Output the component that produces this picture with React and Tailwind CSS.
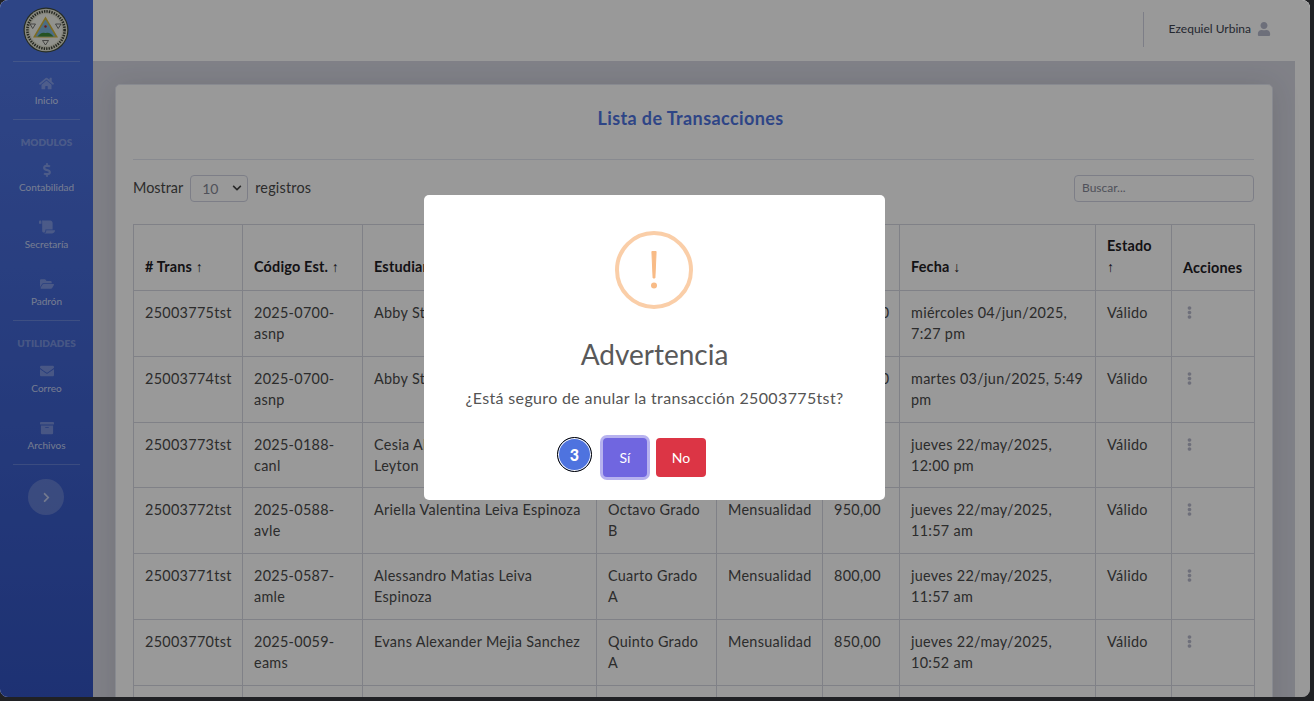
import React from 'react';
import {
  FaHome, FaDollarSign, FaScroll, FaFolderOpen, FaEnvelope, FaArchive, FaChevronRight,
  FaUser, FaEllipsisV, FaChevronDown,
} from 'react-icons/fa';

const FONT = "font-['Lato','Noto_Sans',sans-serif]";

const rows = [
  ['25003775tst', '2025-0700-asnp', 'Abby Stephanie Navarro Perez', 'Octavo Grado A', 'Mensualidad', '1000,00', 'miércoles 04/jun/2025, 7:27 pm'],
  ['25003774tst', '2025-0700-asnp', 'Abby Stephanie Navarro Perez', 'Octavo Grado A', 'Mensualidad', '1000,00', 'martes 03/jun/2025, 5:49 pm'],
  ['25003773tst', '2025-0188-canl', 'Cesia Abigail Navarro Sequeira Leyton', 'Sexto Grado A', 'Mensualidad', '850,00', 'jueves 22/may/2025, 12:00 pm'],
  ['25003772tst', '2025-0588-avle', 'Ariella Valentina Leiva Espinoza', 'Octavo Grado B', 'Mensualidad', '950,00', 'jueves 22/may/2025, 11:57 am'],
  ['25003771tst', '2025-0587-amle', 'Alessandro Matias Leiva Espinoza', 'Cuarto Grado A', 'Mensualidad', '800,00', 'jueves 22/may/2025, 11:57 am'],
  ['25003770tst', '2025-0059-eams', 'Evans Alexander Mejia Sanchez', 'Quinto Grado A', 'Mensualidad', '850,00', 'jueves 22/may/2025, 10:52 am'],
  ['', '', '', '', '', '', ''],
];

const Seal = () => (
  <svg width="46" height="46" viewBox="0 0 46 46">
    <circle cx="23" cy="23" r="22.5" fill="#3f4a3c" />
    <circle cx="23" cy="23" r="21.3" fill="#e2e2d2" />
    <circle cx="23" cy="23" r="18.6" fill="none" stroke="#3d4238" strokeWidth="2.6" strokeDasharray="1.4 1.1" />
    <circle cx="23" cy="23" r="16" fill="#f2f4ec" />
    <path d="M22.5 9.5 L35 30.5 L10 30.5 Z" fill="#d4b435" />
    <path d="M22.5 12.5 L32.6 29.5 L12.4 29.5 Z" fill="#7db6dc" />
    <path d="M14.5 29.5 Q18 24.5 22.5 26 Q27 24.5 30.5 29.5 Z" fill="#3e8a3a" />
    <circle cx="22.5" cy="19.5" r="1.2" fill="#b03030" />
    <path d="M7 17 L12.5 17 L9.7 21.5 Z M32.5 17 L38 17 L35.2 21.5 Z M19.5 33.5 L25.5 33.5 L22.5 38 Z" fill="none" stroke="#555" strokeWidth="0.8" />
  </svg>
);

const NavItem = ({ icon: Icon, label, size = 14 }) => (
  <a className="flex h-[57px] flex-col items-center pt-[14px]">
    <span className="flex h-[14px] items-center">
      <Icon size={size} className="text-white/30" />
    </span>
    <span className="mt-[3px] text-[10px] leading-[15px] text-white/70">{label}</span>
  </a>
);

const Divider = () => <div className="mx-[13px] h-px bg-white/20" />;

const Heading = ({ children }) => (
  <div className="-mb-px pt-[15px] text-center text-[10px] leading-[15px] font-extrabold text-white/30">{children}</div>
);

const Sidebar = () => (
  <aside className="flex w-[93px] shrink-0 flex-col bg-gradient-to-b from-[#4e73df] from-10% to-[#3253c0]">
    <div className="flex h-[61px] items-center justify-center pr-px pb-px"><Seal /></div>
    <Divider />
    <NavItem icon={FaHome} label="Inicio" size={15} />
    <Divider />
    <Heading>MODULOS</Heading>
    <NavItem icon={FaDollarSign} label="Contabilidad" />
    <NavItem icon={FaScroll} label="Secretaría" size={16} />
    <NavItem icon={FaFolderOpen} label="Padrón" />
    <Divider />
    <Heading>UTILIDADES</Heading>
    <NavItem icon={FaEnvelope} label="Correo" />
    <NavItem icon={FaArchive} label="Archivos" />
    <Divider />
    <button className="mt-[14px] ml-[28px] flex h-9 w-9 items-center justify-center rounded-full bg-white/20">
      <FaChevronRight size={11} className="text-white/60" />
    </button>
  </aside>
);

const Topbar = () => (
  <header className="flex h-[61px] shrink-0 items-center justify-end bg-white pr-[39px] pb-[3px]">
    <div className="mr-[25px] h-[35px] w-px bg-[#d1d3e2]" />
    <span className="text-[12px] text-[#3d4351]">Ezequiel Urbina</span>
    <FaUser size={14} className="ml-[6px] text-[#b6b9cc]" />
  </header>
);

const Arrow = ({ children }) => (
  <span className="font-['Liberation_Sans',sans-serif] text-[14px] font-bold">{children}</span>
);

const Th = ({ children }) => (
  <th className="border border-[#d5d7e2] px-[11px] pt-[10px] pb-[12px] text-left align-bottom text-[14.4px] leading-[21px] font-bold tracking-[0.2px] text-[#1f2125]">{children}</th>
);

const Td = ({ children }) => (
  <td className="border border-[#d5d7e2] px-[11px] pt-[11px] pb-[11px] align-top text-[14.4px] leading-[21px] tracking-[0.3px] text-[#4a4a4a]">{children}</td>
);

const Table = () => (
  <table className="w-[1121px] table-fixed border-collapse">
    <colgroup>
      <col className="w-[109px]" />
      <col className="w-[120px]" />
      <col className="w-[234px]" />
      <col className="w-[120px]" />
      <col className="w-[106px]" />
      <col className="w-[77px]" />
      <col className="w-[196px]" />
      <col className="w-[76px]" />
      <col className="w-[83px]" />
    </colgroup>
    <thead>
      <tr>
        <Th># Trans <Arrow>↑</Arrow></Th>
        <Th>Código Est. <Arrow>↑</Arrow></Th>
        <Th>Estudiante <Arrow>↑</Arrow></Th>
        <Th>Grado <Arrow>↑</Arrow></Th>
        <Th>Concepto <Arrow>↑</Arrow></Th>
        <Th>Total</Th>
        <Th>Fecha <Arrow>↓</Arrow></Th>
        <Th>Estado<br /><Arrow>↑</Arrow></Th>
        <Th>Acciones</Th>
      </tr>
    </thead>
    <tbody>
      {rows.map((r, i) => (
        <tr key={i} className="h-[65.8px]">
          {r.map((c, j) => <Td key={j}>{c}</Td>)}
          <Td>{r[0] ? 'Válido' : ''}</Td>
          <Td>{r[0] ? <FaEllipsisV size={13} className="mt-[4px] text-[#b7b9cc]" /> : ''}</Td>
        </tr>
      ))}
    </tbody>
  </table>
);

const Card = () => (
  <section className="rounded-[5px] border border-[#e3e6f0] bg-white pr-[18px] pl-[17px] shadow-[0_2px_28px_rgba(58,59,69,0.15)]">
    <h2 className="flex h-[74px] items-end justify-center pr-[6px] pb-[27px] text-[18px] font-bold tracking-[0.4px] text-[#4e73df]">Lista de Transacciones</h2>
    <hr className="border-[#e3e6f0]" />
    <div className="flex h-[64px] items-center justify-between pb-[8px] text-[14.4px] text-[#4a4a4a]">
      <div className="flex items-center">
        <span>Mostrar</span>
        <div className="mx-[7px] flex h-[27px] w-[58px] items-center justify-between rounded-[4px] border border-[#d1d3e2] px-[11px] text-[14px] text-[#858796]">
          10 <FaChevronDown size={10} className="-mr-[6px] text-[#444]" />
        </div>
        <span className="tracking-[0.2px]">registros</span>
      </div>
      <div className="flex h-[27px] w-[180px] items-center rounded-[4px] border border-[#d1d3e2] px-[7px] text-[12px] text-[#858796]">Buscar...</div>
    </div>
    <Table />
  </section>
);

const Modal = () => (
  <div className="absolute inset-0 flex items-start justify-center bg-black/40 pt-[195px] pr-px">
    <div className="flex h-[305px] w-[461px] flex-col items-center rounded-[5px] bg-white">
      <div className="mt-[36px] mr-[2px] flex h-[78px] w-[78px] items-center justify-center rounded-full border-4 border-[#facea8]">
        <svg width="8" height="40" viewBox="0 0 8 40">
          <path d="M1.9 1.5 L6.1 1.5 L4.9 28 L3.1 28 Z" fill="#f8bb86" stroke="#f8bb86" strokeWidth="1" strokeLinejoin="round" />
          <circle cx="4" cy="35.5" r="3" fill="#f8bb86" />
        </svg>
      </div>
      <h2 className="mt-[30px] text-[28px] leading-[30px] text-[#595959]">Advertencia</h2>
      <p className="mt-[17px] text-[16px] leading-[24px] tracking-[0.35px] text-[#545454]">¿Está seguro de anular la transacción 25003775tst?</p>
      <div className="mt-[28px] mr-[46px] flex items-start">
        <div className="mt-[-1px] mr-[11px] flex h-[35px] w-[35px] items-center justify-center rounded-full border-[1.5px] border-black bg-[#4e73df] text-[16px] font-black text-white shadow-[inset_0_0_0_1px_white]">3</div>
        <button className="h-[39px] w-[44px] rounded-[4px] bg-[#7066e0] text-[14px] text-white shadow-[0_0_0_3px_rgba(112,102,224,0.5)]">Sí</button>
        <button className="ml-[9px] h-[39px] w-[50px] rounded-[4px] bg-[#dc3545] text-[14px] text-white">No</button>
      </div>
    </div>
  </div>
);

export default function App() {
  return (
    <div className={`h-[701px] w-[1314px] overflow-hidden bg-[#202124] ${FONT}`}>
      <div className="relative flex h-[697px] w-[1310px] overflow-hidden rounded-[8px] bg-white">
        <Sidebar />
        <main className="flex min-w-0 flex-1 flex-col">
          <Topbar />
          <div className="flex-1 overflow-hidden pr-[15px]">
            <div className="h-full bg-[#d6d7e2] px-[22px] pt-[23px]">
              <Card />
            </div>
          </div>
        </main>
        <Modal />
      </div>
    </div>
  );
}
